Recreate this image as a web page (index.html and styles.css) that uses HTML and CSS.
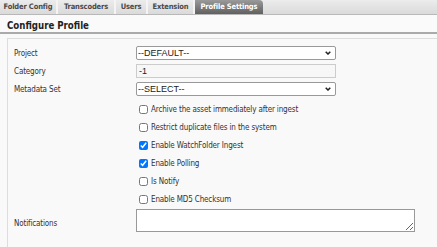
FILE: index.html
```html
<!DOCTYPE html>
<html>
<head>
<meta charset="utf-8">
<link rel="stylesheet" href="styles.css">
</head>
<body>
<div class="tabs">
  <div class="tab">Folder Config</div>
  <div class="tab">Transcoders</div>
  <div class="tab">Users</div>
  <div class="tab">Extension</div>
  <div class="tab active">Profile Settings</div>
</div>
<div class="header"><h1>Configure Profile</h1></div>
<div class="panel">
  <div class="row">
    <label class="lbl">Project</label>
    <select class="ctl sel"><option>--DEFAULT--</option></select>
  </div>
  <div class="row">
    <label class="lbl">Category</label>
    <input class="ctl txt" type="text" value="-1">
  </div>
  <div class="row">
    <label class="lbl">Metadata Set</label>
    <select class="ctl sel"><option>--SELECT--</option></select>
  </div>
  <div class="checks">
    <label class="chk"><input type="checkbox">Archive the asset immediately after ingest</label>
    <label class="chk"><input type="checkbox">Restrict duplicate files in the system</label>
    <label class="chk"><input type="checkbox" checked>Enable WatchFolder Ingest</label>
    <label class="chk"><input type="checkbox" checked>Enable Polling</label>
    <label class="chk"><input type="checkbox">Is Notify</label>
    <label class="chk"><input type="checkbox">Enable MD5 Checksum</label>
  </div>
  <div class="row notif">
    <label class="lbl">Notifications</label>
    <textarea class="area"></textarea>
  </div>
</div>
</body>
</html>
```
FILE: styles.css
```css
* { box-sizing: border-box; }
html, body { margin: 0; padding: 0; }
body {
  width: 437px;
  height: 247px;
  overflow: hidden;
  background: #f9f9f9;
  font-family: "DejaVu Sans Condensed", "DejaVu Sans", sans-serif;
  font-size: 8px;
  letter-spacing: -0.15px;
  color: #333;
}
.tabs {
  display: flex;
  height: 15px;
  background: linear-gradient(#ececec, #dadada);
  border-bottom: 1px solid #b8b8b8;
}
.tab {
  line-height: 14px;
  font-size: 7.5px;
  letter-spacing: -0.15px;
  font-weight: bold;
  color: #4a4a4a;
  border-right: 2px solid #f4f4f4;
  white-space: nowrap;
  text-align: center;
}
.tab:nth-child(1) { width: 58px; }
.tab:nth-child(2) { width: 58px; }
.tab:nth-child(3) { width: 32px; }
.tab:nth-child(4) { width: 47px; }
.tab.active {
  width: 68px;
  background: linear-gradient(#9a9a9a, #606060);
  color: #fff;
  border-right: none;
  border-radius: 0 4px 0 0;
}
.header {
  background: #fafafa;
  padding: 4px 7px 0;
  height: 19px;
  border-bottom: 2px solid #aaa;
}
h1 {
  margin: 0;
  font-size: 9.6px;
  letter-spacing: 0;
  font-weight: bold;
  color: #222;
  line-height: 13px;
}
.panel {
  margin: 4px 0 0 7px;
  border-left: 1px solid #ddd;
  border-top: 1px solid #ddd;
  border-bottom: 1px solid #ddd;
  padding: 7px 0 14px 6px;
  height: 210px;
}
.row {
  display: grid;
  grid-template-columns: 122px 1fr;
  align-items: center;
  height: 14px;
  margin-bottom: 4px;
}
.lbl { color: #333; }
.ctl {
  width: 200px;
  height: 14px;
  border: 1px solid #999;
  border-radius: 2px;
  font-family: "Liberation Sans", Arial, sans-serif;
  font-size: 9px;
  letter-spacing: 0;
  color: #222;
  background: #fff;
  padding: 0 1px;
  margin: 0;
}
.sel {
  appearance: none;
  -webkit-appearance: none;
  background: #fff url("data:image/svg+xml;utf8,<svg xmlns='http://www.w3.org/2000/svg' width='6' height='4' viewBox='0 0 6 4'><path d='M0.7 0.7 L3 3 L5.3 0.7' fill='none' stroke='%23222' stroke-width='1.5'/></svg>") no-repeat right 4px center;
  background-size: 6px 4px;
}
.txt {
  border: 1px solid #ccc;
  background: #f7f7f7;
  border-radius: 0;
  padding: 0 2px;
}
.checks {
  display: flex;
  flex-direction: column;
  padding-left: 124px;
}
.chk {
  display: flex;
  align-items: center;
  height: 18px;
}
.chk input {
  width: 9px;
  height: 9px;
  margin: 0 3px 0 1px;
}
.notif {
  margin-top: 1px;
  height: 23px;
  align-items: end;
}
.notif .lbl { padding-bottom: 4px; }
.area {
  width: 279px;
  height: 23px;
  border: 1px solid #999;
  background: #fff;
  margin: 0;
  resize: vertical;
}
```
